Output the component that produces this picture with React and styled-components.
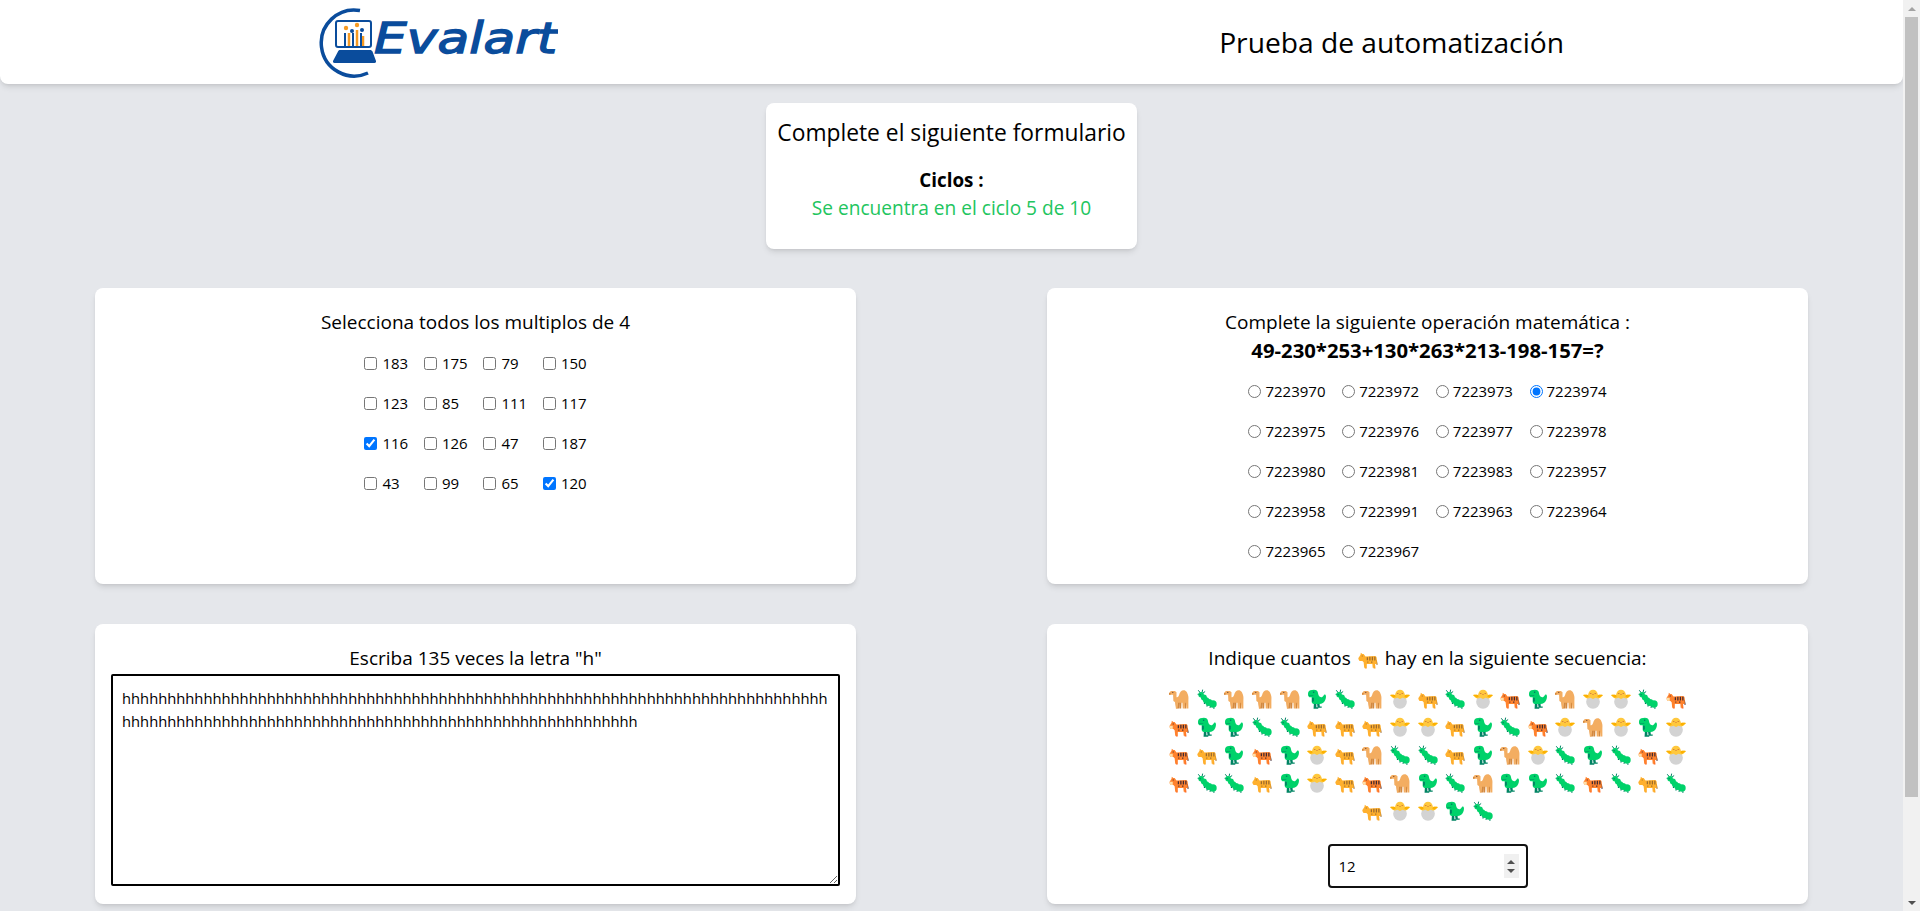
import React from 'react';
import styled, { createGlobalStyle } from 'styled-components';

const GlobalStyle = createGlobalStyle`
  html, body {
    margin: 0;
    padding: 0;
    height: 100%;
    overflow: hidden;
    background: #e5e7eb;
    color: #000;
    font-family: "Open Sans", "Noto Sans", sans-serif;
  }
`;

const Shell = styled.div`
  display: flex;
  height: 100vh;
`;

const Page = styled.main`
  flex: 1;
  min-width: 0;
  overflow: hidden;
`;

const Scrollbar = styled.div`
  width: 17px;
  flex: none;
  display: flex;
  flex-direction: column;
  align-items: center;
  background: #f1f1f1;
`;

const ScrollArrow = styled.div`
  height: 17px;
  flex: none;
  display: flex;
  align-items: center;
  justify-content: center;
  &::before {
    content: '';
    border-left: 4px solid transparent;
    border-right: 4px solid transparent;
    ${(props) =>
      props.$down
        ? 'border-top: 4px solid #505050;'
        : 'border-bottom: 4px solid #a3a3a3;'}
  }
`;

const ScrollThumb = styled.div`
  width: 13px;
  height: 780px;
  background: #c1c1c1;
`;

const ScrollGap = styled.div`
  flex: 1;
`;

const Header = styled.header`
  height: 84px;
  display: flex;
  align-items: center;
  justify-content: space-between;
  padding: 0 339px 0 318px;
  background: #fff;
  border-radius: 0 0 8px 8px;
  box-shadow: 0 4px 6px -1px rgba(0, 0, 0, 0.1), 0 2px 4px -2px rgba(0, 0, 0, 0.1);
`;

const HeaderTitle = styled.h1`
  margin: 0;
  font-size: 28.2px;
  font-weight: 400;
`;

const Intro = styled.section`
  width: 371px;
  height: 146px;
  box-sizing: border-box;
  margin: 19px auto 39px;
  padding-top: 14px;
  background: #fff;
  border-radius: 8px;
  text-align: center;
  box-shadow: 0 4px 6px -1px rgba(0, 0, 0, 0.1), 0 2px 4px -2px rgba(0, 0, 0, 0.1);
`;

const IntroTitle = styled.h2`
  margin: 0 0 17px;
  font-size: 22.8px;
  line-height: 32px;
  font-weight: 400;
`;

const CyclesLabel = styled.div`
  font-size: 18.8px;
  line-height: 28px;
  font-weight: 700;
`;

const CyclesValue = styled.div`
  font-size: 19.1px;
  line-height: 28px;
  color: #22c55e;
`;

const Cards = styled.div`
  display: grid;
  grid-template-columns: 761px 761px;
  column-gap: 191px;
  row-gap: 40px;
  padding-left: 95px;
`;

const Card = styled.section`
  height: ${(props) => props.$height}px;
  box-sizing: border-box;
  padding-top: 20px;
  background: #fff;
  border-radius: 8px;
  text-align: center;
  box-shadow: 0 4px 6px -1px rgba(0, 0, 0, 0.1), 0 2px 4px -2px rgba(0, 0, 0, 0.1);
`;

const CardTitle = styled.h3`
  margin: 0;
  font-size: 19px;
  line-height: 28px;
  font-weight: 400;
`;

const Equation = styled.div`
  font-size: 20.3px;
  line-height: 28px;
  font-weight: 700;
`;

const OptionGrid = styled.div`
  display: grid;
  grid-template-columns: repeat(3, ${(props) => props.$column}px) auto;
  grid-auto-rows: 40px;
  justify-content: center;
  margin-top: ${(props) => props.$top}px;
`;

const Option = styled.label`
  display: flex;
  align-items: center;
  gap: ${(props) => props.$gap}px;
  font-size: 15px;
  white-space: nowrap;
  input {
    margin: 0;
    flex: none;
  }
`;

const LetterBox = styled.textarea`
  display: block;
  width: 729px;
  height: 212px;
  box-sizing: border-box;
  margin: 2px auto 0;
  padding: 11px 9px 8px;
  border: 2px solid #000;
  border-radius: 2px;
  outline: none;
  font-family: inherit;
  font-size: 14.75px;
  line-height: 23px;
  color: #000;
`;

const EmojiRows = styled.div`
  display: flex;
  flex-wrap: wrap;
  justify-content: center;
  width: 525px;
  margin: 9px auto 0;
`;

const EmojiCell = styled.span`
  width: 27.6px;
  height: 28px;
  display: flex;
  align-items: center;
  justify-content: center;
`;

const InlineEmoji = styled.span`
  display: inline-block;
  vertical-align: -4px;
  margin: 0 7px;
`;

const CountField = styled.div`
  position: relative;
  width: 200px;
  margin: 19px auto 0;
`;

const CountInput = styled.input`
  display: block;
  width: 100%;
  height: 44px;
  box-sizing: border-box;
  padding: 0 9px;
  border: 2px solid #111;
  border-radius: 4px;
  outline: none;
  font-family: inherit;
  font-size: 15px;
  color: #000;
  appearance: textfield;
  &::-webkit-inner-spin-button {
    appearance: none;
  }
`;

const Spinner = styled.div`
  position: absolute;
  top: 10px;
  right: 9px;
  width: 15px;
  height: 24px;
  display: flex;
  flex-direction: column;
  align-items: center;
  justify-content: center;
  gap: 5px;
  background: #f0f0f0;
`;

const SpinArrow = styled.span`
  border-left: 4px solid transparent;
  border-right: 4px solid transparent;
  ${(props) =>
    props.$down
      ? 'border-top: 4px solid #505050;'
      : 'border-bottom: 4px solid #505050;'}
`;

const Camel = () => (
  <>
    <path fill="#D3883E" d="M10 20h3l1 11h-2.500zM17 20h3l-.5 11h-2.500zM24 20h3l.5 11H25zM14 20h3l-.5 11H14z" />
    <path fill="#F3AD61" d="M0 6.500 3 3h6.500L12 5v8c2 1 3-1 4-3 1-5 4-8 7.500-8 4 0 6 4 7 8 1 3 .5 6 .5 9v12h-3l-1-9h-1.500l-.5 9H22l-.5-9H14l-.5 9H11l-1-10-3-2-.5-10H3L0 9z" />
    <path fill="#D3883E" d="M0 6.500h2.500V9H0z" />
    <circle cx="6" cy="5.500" r="1" fill="#6D4534" />
  </>
);

const Bug = () => (
  <>
    <path stroke="#008463" strokeWidth="1.600" fill="none" d="M6 7 2 2M8 6l1-5M4 8.500H1M9 7l4-3" />
    <circle cx="6.500" cy="9" r="4.400" fill="#00D26A" />
    <circle cx="11" cy="13.500" r="4.800" fill="#00D26A" />
    <circle cx="14.500" cy="18" r="5" fill="#00D26A" />
    <circle cx="19" cy="21.500" r="5.500" fill="#00D26A" />
    <circle cx="25.500" cy="24" r="6" fill="#00D26A" />
    <circle cx="5" cy="9" r="1.200" fill="#008463" />
    <path fill="#008463" d="M11 22h2v2h-2zM15 26h2v2h-2zM20 28h2v2h-2zM26 29.500h2v2h-2z" />
  </>
);

const Rex = () => (
  <>
    <path fill="#008463" d="M11 23h4v6h3v2.500h-7.500zM16 23h4l.5 5h3v2H17z" />
    <path fill="#00D26A" d="M2 5c1-3 5-4 9-4 4 0 6 2 6.500 5 .5 2.500 1 5 3 6.500 2.500 1.500 4 .5 5.500-1.500 1-1.500 2-3 3.500-2 1.500 1.500 1 5.500-.5 9-2 4-5 6-9 6H11c-2 0-3.500-2-3.500-4v-7H5c-3 0-4-4-3-8z" />
    <path fill="#008463" d="M8 14h3v5H8zM8 18h2.500v2.500H8zM9.500 4h2.200v2.200H9.500zM3 9.500h7v1H3z" />
  </>
);

const Chick = () => (
  <>
    <circle cx="16" cy="20.500" r="11" fill="#D3D3D3" />
    <path fill="#FFC83D" d="M16 1c4 0 7 3 8 8.500 2.500-.5 5-.5 8 0-2 3-5 5.500-8 5.500l-4-1-4 2-4-2-4 1c-3 0-6-2.500-8-5.500 3-.5 5.500-.5 8 0C9 4 12 1 16 1z" />
    <path fill="#FCB100" d="M0 9.500c3-.5 5.500-.5 8 0l1 3-3 1.500zM32 9.500c-3-.5-5.500-.5-8 0l-1 3 3 1.500z" />
    <path fill="#CA6A3E" d="M11 6.500h2.500v1H11zM18.500 6.500H21v1h-2.500zM15 8.500h2v1.200h-2z" />
  </>
);

const cat = (body, shade, mark, muzzle) => (
  <>
    <path fill={mark} d="M28 17h2l1.500 8h-2z" />
    <path fill={shade} d="M10 22h3l1 9h-3zM24 22h3l1 9h-3z" />
    <path fill={body} d="M1 14 4 9l.5-3L7 8h2l3 4 15-1c2 0 3 2 3 5v8h-3l-.5 6h-3l-.5-6H14l-.5 6H10l-1-9-2-2H4c-2 0-3.500-2-3-5z" />
    <path fill={muzzle} d="M1 14h5v5H4c-2 0-3.500-2-3-5z" />
    <path fill={mark} d="M14 13h2v5h-2zM18 12.500h2v6h-2zM22 12.500h2v6h-2zM26 12.500h2v6h-2zM6 10.500h1.500V12H6zM15 20h1.500v2H15zM21 20h2v2h-2z" />
  </>
);

const Leopard = () => cat('#FFB02E', '#F9A020', '#9B6A2F', '#FFB02E');
const Tiger = () => cat('#FF822D', '#FF6723', '#402A32', '#FFDEA7');

const emojiTypes = { c: Camel, b: Bug, r: Rex, h: Chick, l: Leopard, t: Tiger };

const Emoji = ({ type, size = 20 }) => {
  const Shape = emojiTypes[type];
  return (
    <svg width={size} height={size} viewBox="0 0 32 32" aria-hidden="true">
      <Shape />
    </svg>
  );
};

const Logo = () => (
  <svg width="240" height="72" viewBox="0 0 240 72" aria-label="Evalart">
    <path fill="none" stroke="#0A4C9C" strokeWidth="3.500" d="M42 4.500A33 33 0 1 0 50 67" />
    <rect x="18" y="15" width="35" height="26" rx="2" fill="#fff" stroke="#0A4C9C" strokeWidth="2" />
    <path stroke="#F59A23" strokeWidth="2.500" d="M31 27v13M39 24v16M45 30v10" />
    <path stroke="#0A4C9C" strokeWidth="2" d="M27 27v13M35 27v13M43 27v13" />
    <circle cx="28" cy="22" r="2.200" fill="#F59A23" />
    <circle cx="39" cy="19" r="2.200" fill="#F59A23" />
    <circle cx="34" cy="25" r="2" fill="#0A4C9C" />
    <circle cx="44" cy="24" r="2" fill="#0A4C9C" />
    <path fill="#0A4C9C" d="M22 44h30c1 0 2 .500 2.500 1.500L58 55c.300 1-.500 2-1.500 2h-40c-1 0-1.800-1-1.500-2l5-9.500c.500-1 1-1.500 2-1.500z" />
    <text
      x="56"
      y="47"
      textLength="183"
      lengthAdjust="spacingAndGlyphs"
      fontFamily="DejaVu Sans, sans-serif"
      fontStyle="italic"
      fontSize="43"
      fill="#0A4C9C"
      stroke="#0A4C9C"
      strokeWidth="1.400"
    >
      Evalart
    </text>
  </svg>
);

const multiples = [
  [183, 0], [175, 0], [79, 0], [150, 0],
  [123, 0], [85, 0], [111, 0], [117, 0],
  [116, 1], [126, 0], [47, 0], [187, 0],
  [43, 0], [99, 0], [65, 0], [120, 1],
];

const answers = [
  7223970, 7223972, 7223973, 7223974,
  7223975, 7223976, 7223977, 7223978,
  7223980, 7223981, 7223983, 7223957,
  7223958, 7223991, 7223963, 7223964,
  7223965, 7223967,
];

const sequence =
  'cbcccrbchlbhtrchhbt' +
  'trrbblllhhlrbthchrh' +
  'tlrtrhlcbblrchbrbth' +
  'tbblrhltcrbcrrbtblb' +
  'lhhrb';

export default function App() {
  return (
    <>
      <GlobalStyle />
      <Shell>
        <Page>
          <Header>
            <Logo />
            <HeaderTitle>Prueba de automatización</HeaderTitle>
          </Header>

          <Intro>
            <IntroTitle>Complete el siguiente formulario</IntroTitle>
            <CyclesLabel>Ciclos :</CyclesLabel>
            <CyclesValue>Se encuentra en el ciclo 5 de 10</CyclesValue>
          </Intro>

          <Cards>
            <Card $height={296}>
              <CardTitle>Selecciona todos los multiplos de 4</CardTitle>
              <OptionGrid $column={59.5} $top={7}>
                {multiples.map(([value, checked]) => (
                  <Option key={value} $gap={5}>
                    <input type="checkbox" defaultChecked={!!checked} />
                    {value}
                  </Option>
                ))}
              </OptionGrid>
            </Card>

            <Card $height={296}>
              <CardTitle>Complete la siguiente operación matemática :</CardTitle>
              <Equation>49-230*253+130*263*213-198-157=?</Equation>
              <OptionGrid $column={93.7} $top={7}>
                {answers.map((value) => (
                  <Option key={value} $gap={4}>
                    <input type="radio" name="answer" defaultChecked={value === 7223974} />
                    {value}
                  </Option>
                ))}
              </OptionGrid>
            </Card>

            <Card $height={280}>
              <CardTitle>Escriba 135 veces la letra "h"</CardTitle>
              <LetterBox defaultValue={'h'.repeat(135)} />
            </Card>

            <Card $height={280}>
              <CardTitle>
                Indique cuantos
                <InlineEmoji>
                  <Emoji type="l" />
                </InlineEmoji>
                hay en la siguiente secuencia:
              </CardTitle>
              <EmojiRows>
                {sequence.split('').map((type, i) => (
                  <EmojiCell key={i}>
                    <Emoji type={type} />
                  </EmojiCell>
                ))}
              </EmojiRows>
              <CountField>
                <CountInput type="number" defaultValue={12} />
                <Spinner>
                  <SpinArrow />
                  <SpinArrow $down />
                </Spinner>
              </CountField>
            </Card>
          </Cards>
        </Page>

        <Scrollbar>
          <ScrollArrow />
          <ScrollThumb />
          <ScrollGap />
          <ScrollArrow $down />
        </Scrollbar>
      </Shell>
    </>
  );
}
